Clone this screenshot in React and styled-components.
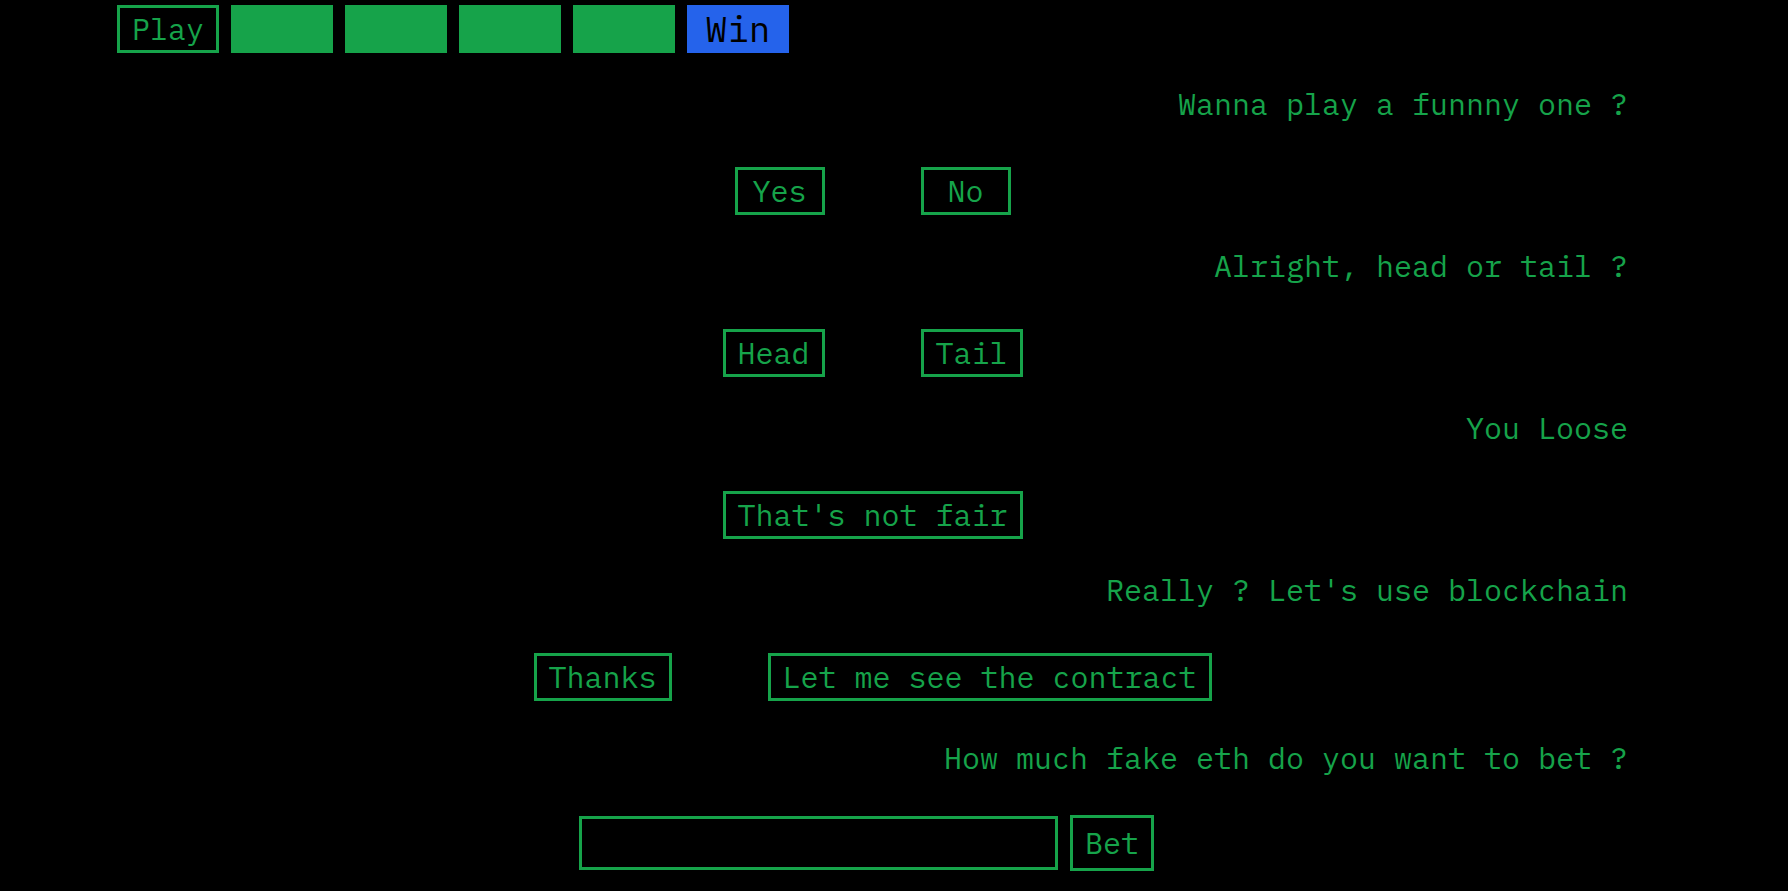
import React, { useState } from "react";
import styled, { createGlobalStyle, css } from "styled-components";

const green = "#16a34a";
const blue = "#2563eb";

const GlobalStyle = createGlobalStyle`
  *, *::before, *::after {
    box-sizing: border-box;
  }
  body {
    margin: 0;
    background: #000;
    color: ${green};
    font-family: "IBM Plex Mono", "Liberation Mono", monospace;
    font-size: 30px;
    font-weight: 400;
    line-height: 36px;
  }
`;

const Page = styled.main`
  display: flex;
  flex-direction: column;
  gap: 33px;
  min-height: 100vh;
  padding: 5px 160px 20px 117px;
`;

const Progress = styled.div`
  display: flex;
  flex-wrap: wrap;
  gap: 12px;
`;

const outlined = css`
  margin: 0;
  border: 3px solid ${green};
  border-radius: 0;
  background: transparent;
  color: inherit;
  font: inherit;
`;

const Button = styled.button`
  ${outlined}
  min-width: ${({ $tall }) => ($tall ? "0" : "90px")};
  padding: ${({ $tall }) => ($tall ? "7px 12px" : "3px 12px")};
  text-align: center;
  cursor: pointer;
`;

const Step = styled.div`
  width: 102px;
  height: 48px;
  padding: 4px 0;
  background: ${({ $goal }) => ($goal ? blue : green)};
  color: #000;
  font-size: 36px;
  line-height: 40px;
  text-align: center;
`;

const Exchange = styled.section`
  display: flex;
  flex-direction: column;
  gap: ${({ $form }) => ($form ? "39px" : "45px")};
  padding-top: ${({ $form }) => ($form ? "6px" : "0")};
`;

const Message = styled.p`
  margin: 0;
  text-align: right;
`;

const Choices = styled.div`
  display: flex;
  justify-content: center;
  gap: 96px;
`;

const BetForm = styled.form`
  display: flex;
  justify-content: center;
  align-items: center;
  gap: 12px;
  padding-right: 12px;
`;

const BetInput = styled.input`
  ${outlined}
  width: 479px;
  min-width: 0;
  height: 54px;
  padding: 3px 12px;
  outline: none;
`;

const exchanges = [
  { message: "Wanna play a funnny one ?", choices: ["Yes", "No"] },
  { message: "Alright, head or tail ?", choices: ["Head", "Tail"] },
  { message: "You Loose", choices: ["That's not fair"] },
  {
    message: "Really ? Let's use blockchain",
    choices: ["Thanks", "Let me see the contract"],
  },
];

export default function App() {
  const [amount, setAmount] = useState("");

  return (
    <>
      <GlobalStyle />
      <Page>
        <Progress>
          <Button type="button">Play</Button>
          <Step />
          <Step />
          <Step />
          <Step />
          <Step $goal>Win</Step>
        </Progress>
        {exchanges.map(({ message, choices }) => (
          <Exchange key={message}>
            <Message>{message}</Message>
            <Choices>
              {choices.map((choice) => (
                <Button type="button" key={choice}>
                  {choice}
                </Button>
              ))}
            </Choices>
          </Exchange>
        ))}
        <Exchange $form>
          <Message as="label" htmlFor="bet-amount">
            How much fake eth do you want to bet ?
          </Message>
          <BetForm onSubmit={(event) => event.preventDefault()}>
            <BetInput
              id="bet-amount"
              type="text"
              value={amount}
              onChange={(event) => setAmount(event.target.value)}
            />
            <Button $tall>Bet</Button>
          </BetForm>
        </Exchange>
      </Page>
    </>
  );
}
